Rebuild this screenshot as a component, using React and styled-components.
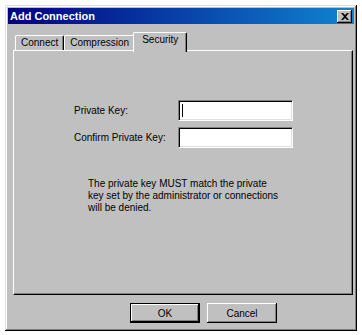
import React from 'react';
import styled, { createGlobalStyle } from 'styled-components';

const Global = createGlobalStyle`
  html, body {
    margin: 0;
    background: #ffffff;
  }
  body {
    font-family: "Liberation Sans", Arial, sans-serif;
    font-size: 10px;
    color: #000;
  }
`;

const Window = styled.div`
  box-sizing: border-box;
  margin: 5px 0 0 5px;
  width: 352px;
  height: 326px;
  padding: 3px;
  background: #c0c0c0;
  box-shadow: inset -1px -1px 0 #000, inset 1px 1px 0 #dfdfdf,
    inset -2px -2px 0 #808080, inset 2px 2px 0 #fff;
  display: flex;
  flex-direction: column;
`;

const TitleBar = styled.div`
  height: 16px;
  display: flex;
  align-items: center;
  justify-content: space-between;
  padding: 0 2px 0 2px;
  background: linear-gradient(to right, #000080, #1084d0);
`;

const Title = styled.span`
  color: #fff;
  font-weight: bold;
  font-size: 11px;
`;

const CloseBtn = styled.div`
  box-sizing: border-box;
  width: 15px;
  height: 13px;
  background: #c0c0c0;
  box-shadow: inset -1px -1px 0 #000, inset 1px 1px 0 #fff,
    inset -2px -2px 0 #808080;
  display: flex;
  align-items: center;
  justify-content: center;
`;

const Body = styled.div`
  padding: 8px 0 0 5px;
  display: flex;
  flex-direction: column;
`;

const TabRow = styled.div`
  display: flex;
  align-items: flex-end;
  height: 18px;
  padding-left: 2px;
  position: relative;
  z-index: 1;
`;

const Tab = styled.div`
  box-sizing: border-box;
  height: ${p => (p.$active ? '20px' : '15px')};
  margin-bottom: ${p => (p.$active ? '-2px' : '0')};
  margin-left: ${p => (p.$active ? '-2px' : '0')};
  margin-right: ${p => (p.$active ? '-2px' : '0')};
  padding: ${p => (p.$active ? '1px 8px 0' : '1px 5px 0')};
  background: #c0c0c0;
  border-top: 1px solid #fff;
  border-left: 1px solid #fff;
  border-right: 1px solid #000;
  box-shadow: inset -1px 0 0 #808080;
  border-radius: 2px 2px 0 0;
  display: flex;
  align-items: flex-start;
  line-height: 12px;
  position: relative;
  z-index: ${p => (p.$active ? 2 : 1)};
`;

const Panel = styled.div`
  box-sizing: border-box;
  width: 340px;
  height: 245px;
  background: #c0c0c0;
  border-top: 1px solid #fff;
  border-left: 1px solid #fff;
  border-right: 1px solid #000;
  border-bottom: 1px solid #000;
  box-shadow: inset -1px -1px 0 #808080;
  padding: 49px 0 0 60px;
`;

const FieldRow = styled.div`
  display: flex;
  align-items: center;
  margin-bottom: 6px;
`;

const Label = styled.div`
  width: 104px;
`;

const Field = styled.div`
  box-sizing: border-box;
  width: 115px;
  height: 21px;
  background: #fff;
  border-top: 1px solid #808080;
  border-left: 1px solid #808080;
  border-right: 1px solid #fff;
  border-bottom: 1px solid #fff;
  box-shadow: inset 1px 1px 0 #000, inset -1px -1px 0 #dfdfdf;
  padding: 3px 0 0 3px;
`;

const Caret = styled.div`
  width: 1px;
  height: 13px;
  background: #000;
`;

const Note = styled.p`
  margin: 30px 0 0 14px;
  line-height: 12px;
`;

const ButtonRow = styled.div`
  display: flex;
  gap: 7px;
  padding: 8px 0 0 117px;
`;

const Button = styled.div`
  box-sizing: border-box;
  width: 70px;
  height: 20px;
  display: flex;
  align-items: center;
  justify-content: center;
  background: #c0c0c0;
  border: ${p => (p.$default ? '1px solid #000' : 'none')};
  box-shadow: inset -1px -1px 0 #000, inset 1px 1px 0 #fff,
    inset -2px -2px 0 #808080;
`;

function App() {
  return (
    <>
      <Global />
      <Window>
        <TitleBar>
          <Title>Add Connection</Title>
          <CloseBtn>
            <svg width="8" height="7" viewBox="0 0 8 7">
              <path d="M0 0h2l2 2 2-2h2L5 3.5 8 7H6L4 5 2 7H0l3-3.5z" fill="#000" />
            </svg>
          </CloseBtn>
        </TitleBar>
        <Body>
          <TabRow>
            <Tab>Connect</Tab>
            <Tab>Compression</Tab>
            <Tab $active>Security</Tab>
          </TabRow>
          <Panel>
            <FieldRow>
              <Label>Private Key:</Label>
              <Field><Caret /></Field>
            </FieldRow>
            <FieldRow>
              <Label>Confirm Private Key:</Label>
              <Field />
            </FieldRow>
            <Note>
              The private key MUST match the private<br />
              key set by the administrator or connections<br />
              will be denied.
            </Note>
          </Panel>
          <ButtonRow>
            <Button $default>OK</Button>
            <Button>Cancel</Button>
          </ButtonRow>
        </Body>
      </Window>
    </>
  );
}

export default App;
